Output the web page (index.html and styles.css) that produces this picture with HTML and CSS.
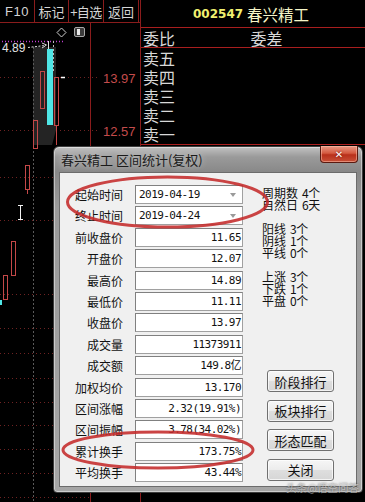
FILE: index.html
```html
<!DOCTYPE html>
<html lang="zh-CN">
<head>
<meta charset="utf-8">
<title>区间统计</title>
<link rel="stylesheet" href="styles.css">
</head>
<body>
<div class="app">
  <div class="left">
    <div class="toolbar">
      <div class="tb tb1">F10</div>
      <div class="tb tb2">标记</div>
      <div class="tb tb3">+自选</div>
      <div class="tb tb4">返回</div>
    </div>
    <svg class="chart" width="140" height="479" viewBox="0 23 140 479">
      <line x1="90.5" y1="23" x2="90.5" y2="502" stroke="#8a1c1c" stroke-width="1"/>
      <g stroke="#6e2222" stroke-width="1" stroke-dasharray="1 3">
        <line x1="0" y1="77.5" x2="100" y2="77.5"/>
        <line x1="0" y1="130.5" x2="100" y2="130.5"/>
        <line x1="0" y1="177.5" x2="90" y2="177.5"/>
        <line x1="0" y1="220.5" x2="90" y2="220.5"/>
        <line x1="0" y1="294.5" x2="90" y2="294.5"/>
        <line x1="0" y1="328.5" x2="90" y2="328.5"/>
        <line x1="0" y1="353.5" x2="90" y2="353.5"/>
        <line x1="0" y1="378.5" x2="90" y2="378.5"/>
        <line x1="0" y1="402.5" x2="90" y2="402.5"/>
        <line x1="0" y1="425.5" x2="90" y2="425.5"/>
        <line x1="0" y1="449.5" x2="90" y2="449.5"/>
        <line x1="0" y1="473.5" x2="90" y2="473.5"/>
        <line x1="0" y1="497.5" x2="90" y2="497.5"/>
      </g>
      <polygon points="33,47 56,47 56,130 52,145 33,145" fill="#242424"/>
      <line x1="33.5" y1="47" x2="33.5" y2="502" stroke="#5a5a5a" stroke-dasharray="2 2"/>
      <line x1="2" y1="41.5" x2="64" y2="41.5" stroke="#c040d0" stroke-dasharray="1 2" stroke-width="1.5"/>
      <polygon points="61.5,28 66,32.5 61.5,37 57,32.5" fill="none" stroke="#cfcfcf" stroke-width="1"/>
      <rect x="74.5" y="27.5" width="10" height="9" rx="1.5" fill="#3a3a3a" stroke="#a8a8a8"/>
      <rect x="77" y="29" width="3" height="6" fill="#e8e8e8"/>
      <text x="2" y="52" class="c-txt">4.89</text>
      <line x1="28" y1="47.5" x2="45" y2="45.5" stroke="#dcdcdc" stroke-dasharray="2 1.5"/>
      <polyline points="42,43 46.5,45 42,48" fill="none" stroke="#dcdcdc"/>
      <line x1="48.5" y1="41" x2="48.5" y2="49" stroke="#e0e0e0"/>
      <line x1="53.5" y1="41" x2="53.5" y2="72" stroke="#bbbbbb" stroke-dasharray="2 2"/>
      <rect x="47" y="49" width="6" height="76" fill="#4fe6e6"/>
      <g fill="none" stroke="#c44848" stroke-width="1">
        <rect x="40.5" y="71.5" width="4" height="37"/>
        <rect x="54.5" y="77.5" width="4" height="48"/>
        <line x1="56.5" y1="125" x2="56.5" y2="145"/>
        <rect x="33.5" y="120.5" width="4" height="28"/>
        <rect x="25.5" y="165.5" width="4" height="24"/>
        <line x1="27.5" y1="190" x2="27.5" y2="194"/>
        <rect x="11.5" y="241.5" width="4" height="34"/>
        <rect x="3.5" y="275.5" width="4" height="24"/>
      </g>
      <line x1="61" y1="77.5" x2="65" y2="77.5" stroke="#ffffff" stroke-width="1.5"/>
      <g stroke="#f2f2f2" stroke-width="1">
        <line x1="20.5" y1="205" x2="20.5" y2="220"/>
        <line x1="18" y1="205.5" x2="23" y2="205.5"/>
        <line x1="18" y1="219.5" x2="23" y2="219.5"/>
      </g>
      <rect x="0" y="300" width="2" height="5" fill="#4fe6e6"/>
      <text x="103" y="83" class="c-price">13.97</text>
      <text x="103" y="136" class="c-price">12.57</text>
    </svg>
  </div>
  <div class="right">
    <div class="head"><span class="code">002547</span><span class="name">春兴精工</span></div>
    <div class="wei"><span class="wb">委比</span><span class="wc">委差</span></div>
    <div class="sells">
      <div class="sell">卖五</div>
      <div class="sell">卖四</div>
      <div class="sell">卖三</div>
      <div class="sell">卖二</div>
      <div class="sell">卖一</div>
    </div>
  </div>
</div>

<div class="dialog">
  <div class="titlebar">春兴精工 区间统计(复权)</div>
  <div class="closebtn">✕</div>
  <div class="client">
    <div class="form">
      <div class="lbl">起始时间</div><div class="fld combo"><span class="date">2019-04-19</span><span class="arrow"></span></div>
      <div class="lbl">终止时间</div><div class="fld combo"><span class="date">2019-04-24</span><span class="arrow"></span></div>
      <div class="lbl">前收盘价</div><div class="fld">11.65</div>
      <div class="lbl">开盘价</div><div class="fld">12.07</div>
      <div class="lbl">最高价</div><div class="fld">14.89</div>
      <div class="lbl">最低价</div><div class="fld">11.11</div>
      <div class="lbl">收盘价</div><div class="fld">13.97</div>
      <div class="lbl">成交量</div><div class="fld">11373911</div>
      <div class="lbl">成交额</div><div class="fld">149.8亿</div>
      <div class="lbl">加权均价</div><div class="fld">13.170</div>
      <div class="lbl">区间涨幅</div><div class="fld">2.32(19.91%)</div>
      <div class="lbl">区间振幅</div><div class="fld">3.78(34.02%)</div>
      <div class="lbl">累计换手</div><div class="fld">173.75%</div>
      <div class="lbl">平均换手</div><div class="fld">43.44%</div>
    </div>
    <div class="side">
      <div class="stats">
        <div class="block">
          <div class="st"><span>周期数</span><span class="v">4个</span></div>
          <div class="st"><span>自然日</span><span class="v">6天</span></div>
        </div>
        <div class="block">
          <div class="st"><span>阳线</span><span class="v">3个</span></div>
          <div class="st"><span>阴线</span><span class="v">1个</span></div>
          <div class="st"><span>平线</span><span class="v">0个</span></div>
        </div>
        <div class="block">
          <div class="st"><span>上涨</span><span class="v">3个</span></div>
          <div class="st"><span>下跌</span><span class="v">1个</span></div>
          <div class="st"><span>平盘</span><span class="v">0个</span></div>
        </div>
      </div>
      <div class="buttons">
        <div class="btn">阶段排行</div>
        <div class="btn">板块排行</div>
        <div class="btn">形态匹配</div>
        <div class="btn">关闭</div>
      </div>
    </div>
  </div>
  <svg class="marks" width="310" height="347" viewBox="0 0 310 347">
    <ellipse cx="114.5" cy="56" rx="100" ry="25" fill="none" stroke="#c42a2a" stroke-width="3" opacity="0.88"/>
    <ellipse cx="105" cy="304" rx="95" ry="18" fill="none" stroke="#c42a2a" stroke-width="3" opacity="0.88"/>
  </svg>
</div>
<div class="watermark">头条@悟空问答</div>
</body>
</html>
```

FILE: styles.css
```css
html, body {
  margin: 0;
  padding: 0;
  background: #000;
}
body {
  width: 365px;
  height: 502px;
  overflow: hidden;
  position: relative;
  font-family: "Noto Sans CJK SC", "DejaVu Sans", sans-serif;
}
.app {
  display: grid;
  grid-template-columns: 140px 225px;
  height: 502px;
}
.left {
  display: flex;
  flex-direction: column;
}
.toolbar {
  display: flex;
  height: 22px;
  border-bottom: 1px solid #8a1c1c;
}
.tb {
  display: flex;
  align-items: center;
  justify-content: center;
  color: #d4d4d4;
  font-size: 13px;
  border-right: 1px solid #8a1c1c;
  box-sizing: border-box;
}
.tb1 { width: 35px; font-family: "Liberation Sans", "Noto Sans CJK SC", sans-serif; font-size: 13px; letter-spacing: 0.5px; }
.tb2 { width: 34px; }
.tb3 { width: 35px; letter-spacing: -0.5px; }
.tb4 { width: 35px; }
.chart { display: block; }
.c-txt {
  font-family: "Liberation Sans", sans-serif;
  font-size: 12px;
  fill: #e4e4e4;
}
.c-price {
  font-family: "Liberation Sans", sans-serif;
  font-size: 13px;
  fill: #c44c4c;
}
.right {
  border-left: 1px solid #8a1c1c;
  display: flex;
  flex-direction: column;
}
.head {
  height: 27px;
  border-bottom: 1px solid #a81e1e;
  display: flex;
  align-items: center;
  padding-left: 52px;
  gap: 4px;
}
.code {
  font-family: "DejaVu Sans", sans-serif;
  font-weight: bold;
  font-size: 12px;
  color: #f0f070;
}
.name {
  font-size: 15.5px;
  color: #f6f6c8;
}
.wei {
  height: 19px;
  border-bottom: 1px solid #a81e1e;
  display: flex;
  align-items: center;
  color: #d8d8d8;
  font-size: 16px;
}
.wb { width: 35px; padding-left: 2px; }
.wc { flex: 1; text-align: center; padding-right: 10px; }
.sells {
  border-bottom: 1px solid #a81e1e;
  padding-top: 1px;
  box-sizing: border-box;
  height: 97px;
}
.sell {
  height: 19px;
  line-height: 19px;
  color: #d8d8d8;
  font-size: 16px;
  padding-left: 2px;
}

.dialog {
  position: absolute;
  left: 53px;
  top: 146px;
  width: 310px;
  height: 347px;
  box-sizing: border-box;
  border: 1px solid #3c3c3c;
  border-radius: 6px 6px 4px 4px;
  background: linear-gradient(180deg, #c2c2c2 0px, #9a9a9a 10px, #888888 25px, #9a9a9a 60px, #a6a6a6 100%);
  box-shadow: inset 0 0 0 1px rgba(255,255,255,0.45);
  padding: 0 5px 5px 5px;
  display: flex;
  flex-direction: column;
}
.titlebar {
  height: 25px;
  display: flex;
  align-items: center;
  padding-left: 2px;
  font-size: 13px;
  color: #1a1a1a;
  text-shadow: 0 0 6px rgba(255,255,255,0.6);
}
.closebtn {
  position: absolute;
  left: 266px;
  top: -1px;
  width: 38px;
  height: 17px;
  box-sizing: border-box;
  border: 1px solid #5a1a10;
  border-top: none;
  border-radius: 0 0 4px 4px;
  background: linear-gradient(180deg, #e99a86 0%, #d45a40 45%, #b8301a 55%, #c85038 100%);
  box-shadow: inset 0 0 0 1px rgba(255,200,180,0.5);
  color: #fff;
  font-family: "DejaVu Sans", sans-serif;
  font-weight: bold;
  font-size: 10px;
  display: flex;
  align-items: center;
  justify-content: center;
  text-shadow: 0 0 2px #600;
}
.client {
  flex: 1;
  background: #f0f0f0;
  border: 1px solid #6c6c6c;
  display: flex;
  padding-top: 12px;
  box-sizing: border-box;
}
.form {
  display: grid;
  grid-template-columns: 63px 108px;
  grid-auto-rows: 19px;
  column-gap: 12px;
  row-gap: 2.4px;
  align-content: start;
}
.lbl {
  text-align: right;
  font-size: 12px;
  line-height: 19px;
  color: #111;
  white-space: nowrap;
}
.fld {
  background: #fff;
  border: 1px solid #a0a0a0;
  border-top-color: #808080;
  border-left-color: #808080;
  box-sizing: border-box;
  font-family: "DejaVu Sans Mono", "Noto Sans CJK SC", monospace;
  font-size: 11px;
  letter-spacing: -0.55px;
  color: #111;
  text-align: right;
  padding-right: 1px;
  line-height: 17px;
  white-space: nowrap;
}
.combo {
  display: flex;
  align-items: center;
  justify-content: space-between;
  text-align: left;
  padding-left: 3px;
  padding-right: 6px;
}
.arrow {
  width: 0;
  height: 0;
  border-left: 3.5px solid transparent;
  border-right: 3.5px solid transparent;
  border-top: 4px solid #9a9a9a;
}
.side {
  margin-left: 19px;
  display: flex;
  flex-direction: column;
}
.stats {
  padding-top: 2px;
  display: flex;
  flex-direction: column;
  gap: 12px;
}
.st {
  height: 12px;
  line-height: 12px;
  font-size: 12px;
  color: #111;
  display: flex;
  gap: 4px;
  white-space: nowrap;
}
.v { letter-spacing: -0.5px; }
.buttons {
  margin-top: 63px;
  margin-left: 5px;
  display: flex;
  flex-direction: column;
  gap: 7.5px;
}
.btn {
  width: 67px;
  height: 22px;
  box-sizing: border-box;
  border: 1px solid #707070;
  border-radius: 3px;
  background: linear-gradient(180deg, #f6f6f6 0%, #ececec 48%, #dedede 52%, #d6d6d6 100%);
  box-shadow: inset 0 0 0 1px rgba(255,255,255,0.7);
  font-size: 13px;
  color: #111;
  display: flex;
  align-items: center;
  justify-content: center;
}
.marks {
  position: absolute;
  left: -1px;
  top: -1px;
  pointer-events: none;
  overflow: visible;
}
.watermark {
  position: absolute;
  left: 286px;
  top: 481px;
  font-size: 10.5px;
  line-height: 14px;
  color: rgba(235,235,235,0.6);
  text-shadow: 0 0 2px rgba(0,0,0,0.6);
  white-space: nowrap;
}
```
